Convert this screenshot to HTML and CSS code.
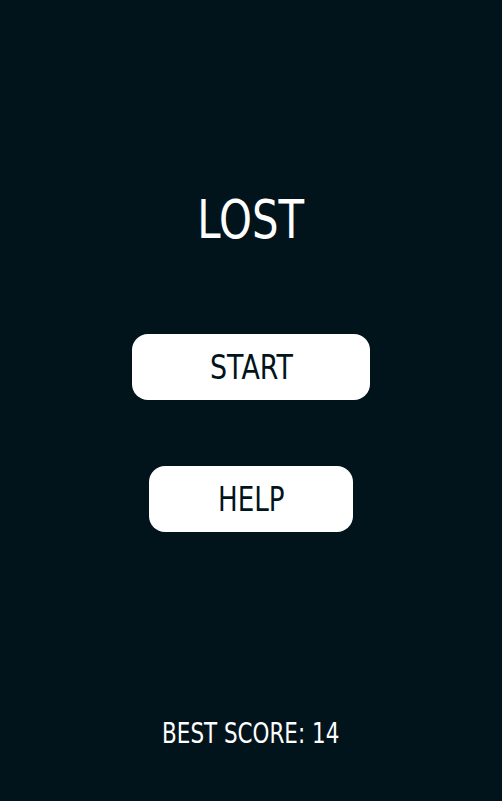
FILE: index.html
```html
<!DOCTYPE html>
<html>
<head>
	<meta charset="utf-8">
	<meta name="viewport" content="width=device-width">
	<title>Lost</title>
	<link rel="stylesheet" href="styles.css">
</head>
<body>
	<div class="menu">
		<h1 class="title"><span class="narrow">LOST</span></h1>
		<div class="buttons">
			<button class="btn start"><span class="narrow">START</span></button>
			<button class="btn help"><span class="narrow">HELP</span></button>
		</div>
		<div class="score"><span class="narrow">BEST SCORE: 14</span></div>
	</div>
</body>
</html>
```

FILE: styles.css
```css
* {
	font-family: "DejaVu Sans", sans-serif;
	box-sizing: border-box;
}

html, body {
	height: 100%;
	margin: 0;
}

body {
	background: #02141b;
	color: white;
}

.menu {
	align-items: center;
	display: flex;
	flex-direction: column;
	height: 100%;
	padding-top: 188px;
}

/* the original face is a condensed one, squeeze the text to match */
.narrow {
	display: inline-block;
	white-space: nowrap;
}

.title {
	font-size: 53px;
	font-weight: normal;
	line-height: 64px;
	margin: 0;
}
.title .narrow {
	transform: scaleX(0.79);
}

.buttons {
	align-items: center;
	display: flex;
	flex-direction: column;
	gap: 66px;
	margin-top: 82px;
}

.btn {
	background: white;
	border: none;
	border-radius: 16px;
	color: #02141b;
	font-size: 34px;
	height: 66px;
	padding: 0;
}
.start {
	width: 238px;
}
.start .narrow {
	transform: scaleX(0.79);
}
.help {
	width: 204px;
}
.help .narrow {
	transform: scaleX(0.77);
}

.score {
	font-size: 29px;
	margin-top: auto;
	margin-bottom: 51px;
}
.score .narrow {
	transform: scaleX(0.74);
}
```
